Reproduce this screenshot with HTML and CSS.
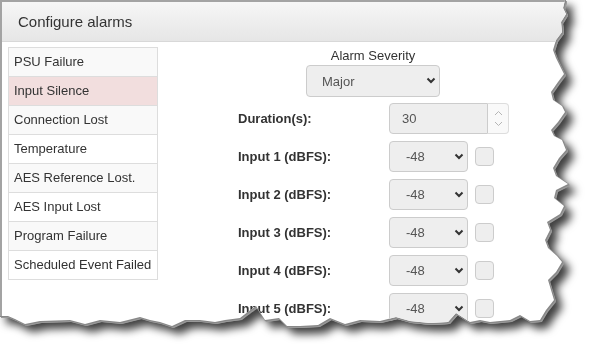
FILE: index.html
```html
<html lang="en">
<head>
    <meta charset="UTF-8">
    <meta name="viewport" content="width=device-width, initial-scale=1.0">
    <title>Configure alarms</title>
    <link rel="stylesheet" href="styles.css">
</head>
<body>
    <div class="shot">
        <div class="panel">
            <div class="panel-heading">Configure alarms</div>
            <div class="panel-body">
                <ul class="alarm-list">
                    <li>PSU Failure</li>
                    <li class="active">Input Silence</li>
                    <li>Connection Lost</li>
                    <li>Temperature</li>
                    <li>AES Reference Lost.</li>
                    <li>AES Input Lost</li>
                    <li>Program Failure</li>
                    <li>Scheduled Event Failed</li>
                </ul>
                <div class="alarm-form">
                    <div class="severity">
                        <label for="severity">Alarm Severity</label>
                        <div class="select-wrap wide">
                            <select id="severity">
                                <option>Major</option>
                                <option>Minor</option>
                                <option>Warning</option>
                            </select>
                            <svg class="chevron" width="10" height="7" viewBox="0 0 10 7"><path d="M1.5 1.5 L5 5 L8.5 1.5" fill="none" stroke="#333" stroke-width="2"/></svg>
                        </div>
                    </div>
                    <div class="row">
                        <label for="duration">Duration(s):</label>
                        <div class="number-wrap">
                            <input type="text" id="duration" value="30">
                            <div class="spinner">
                                <svg width="9" height="6" viewBox="0 0 9 6"><path d="M1 5 L4.5 1.5 L8 5" fill="none" stroke="#b5b5b5" stroke-width="1"/></svg>
                                <svg width="9" height="6" viewBox="0 0 9 6"><path d="M1 1 L4.5 4.5 L8 1" fill="none" stroke="#b5b5b5" stroke-width="1"/></svg>
                            </div>
                        </div>
                    </div>
                    <div class="row">
                        <label>Input 1 (dBFS):</label>
                        <div class="select-wrap">
                            <select><option>-48</option></select>
                            <svg class="chevron" width="10" height="7" viewBox="0 0 10 7"><path d="M1.5 1.5 L5 5 L8.5 1.5" fill="none" stroke="#333" stroke-width="2"/></svg>
                        </div>
                        <span class="check"></span>
                    </div>
                    <div class="row">
                        <label>Input 2 (dBFS):</label>
                        <div class="select-wrap">
                            <select><option>-48</option></select>
                            <svg class="chevron" width="10" height="7" viewBox="0 0 10 7"><path d="M1.5 1.5 L5 5 L8.5 1.5" fill="none" stroke="#333" stroke-width="2"/></svg>
                        </div>
                        <span class="check"></span>
                    </div>
                    <div class="row">
                        <label>Input 3 (dBFS):</label>
                        <div class="select-wrap">
                            <select><option>-48</option></select>
                            <svg class="chevron" width="10" height="7" viewBox="0 0 10 7"><path d="M1.5 1.5 L5 5 L8.5 1.5" fill="none" stroke="#333" stroke-width="2"/></svg>
                        </div>
                        <span class="check"></span>
                    </div>
                    <div class="row">
                        <label>Input 4 (dBFS):</label>
                        <div class="select-wrap">
                            <select><option>-48</option></select>
                            <svg class="chevron" width="10" height="7" viewBox="0 0 10 7"><path d="M1.5 1.5 L5 5 L8.5 1.5" fill="none" stroke="#333" stroke-width="2"/></svg>
                        </div>
                        <span class="check"></span>
                    </div>
                    <div class="row">
                        <label>Input 5 (dBFS):</label>
                        <div class="select-wrap">
                            <select><option>-48</option></select>
                            <svg class="chevron" width="10" height="7" viewBox="0 0 10 7"><path d="M1.5 1.5 L5 5 L8.5 1.5" fill="none" stroke="#333" stroke-width="2"/></svg>
                        </div>
                        <span class="check"></span>
                    </div>
                </div>
            </div>
        </div>
    </div>
</body>
</html>
```

FILE: styles.css
```css
body {
    margin: 0;
    background: #fff;
    font-family: "Liberation Sans", Arial, sans-serif;
    font-size: 13px;
    color: #333;
}
.shot {
    width: 599px;
    height: 363px;
    filter: drop-shadow(1px 0 0 #888) drop-shadow(0 1px 0 #888) drop-shadow(1px 1px 0 #999) drop-shadow(6px 6px 4px rgba(0, 0, 0, 0.75));
}
.panel {
    width: 585px;
    height: 340px;
    background: #fff;
    border-top: 2px solid #a3a3a3;
    border-left: 2px solid #a3a3a3;
    box-sizing: border-box;
    overflow: hidden;
    clip-path: polygon(0 0, 565px 0, 563px 8px, 566px 14px, 561px 22px, 562px 32px, 556px 40px, 553px 50px, 556px 58px, 560px 66px, 564px 74px, 558px 82px, 551px 92px, 553px 100px, 562px 106px, 565px 112px, 558px 122px, 551px 130px, 554px 136px, 562px 140px, 566px 150px, 559px 158px, 553px 168px, 556px 176px, 568px 184px, 556px 190px, 554px 198px, 564px 206px, 560px 214px, 547px 222px, 550px 230px, 545px 240px, 548px 248px, 557px 256px, 562px 262px, 556px 272px, 548px 280px, 551px 290px, 554px 300px, 546px 310px, 540px 320px, 530px 321px, 520px 315px, 510px 320px, 490px 322px, 480px 320px, 470px 322px, 456px 313px, 448px 322px, 430px 323px, 410px 321px, 396px 317px, 380px 321px, 360px 320px, 345px 324px, 330px 318px, 318px 325px, 300px 326px, 287px 326px, 279px 318px, 265px 320px, 256px 306px, 249px 311px, 240px 318px, 225px 320px, 215px 322px, 200px 320px, 185px 320px, 172px 326px, 160px 322px, 150px 320px, 140px 317px, 120px 322px, 100px 320px, 85px 324px, 70px 320px, 40px 321px, 25px 324px, 15px 319px, 8px 316px, 0 316px);
}
.panel-heading {
    height: 39px;
    line-height: 39px;
    padding-left: 16px;
    font-size: 15px;
    color: #333;
    background: linear-gradient(#f6f6f6, #e6e6e6);
    border-bottom: 1px solid #d8d8d8;
}
.panel-body {
    display: flex;
    padding: 5px 6px;
}
.alarm-list {
    list-style: none;
    margin: 0;
    padding: 0;
    width: 150px;
    box-sizing: border-box;
    border: 1px solid #ddd;
    align-self: flex-start;
}
.alarm-list li {
    padding: 6px 5px;
    line-height: 16px;
    white-space: nowrap;
    background: #fff;
}
.alarm-list li + li {
    border-top: 1px solid #ddd;
}
.alarm-list li:nth-child(odd) {
    background: #f9f9f9;
}
.alarm-list li.active {
    background: #f2dede;
}
.alarm-form {
    padding-left: 80px;
    display: flex;
    flex-direction: column;
    gap: 7px;
}
.severity {
    width: 270px;
    text-align: center;
    margin-bottom: -1px;
}
.severity label {
    display: block;
    line-height: 16px;
    padding-top: 1px;
    margin-bottom: 1px;
}
.row {
    display: flex;
    align-items: center;
}
.row label {
    width: 151px;
    font-weight: bold;
}
.select-wrap {
    position: relative;
    width: 79px;
    height: 31px;
}
.select-wrap.wide {
    width: 134px;
    height: 32px;
    margin: 0 auto;
}
.select-wrap select {
    appearance: none;
    -webkit-appearance: none;
    width: 100%;
    height: 100%;
    box-sizing: border-box;
    border: 1px solid #ccc;
    border-radius: 4px;
    background: #eee;
    color: #555;
    font-family: inherit;
    font-size: 13px;
    padding: 0 0 0 16px;
    margin: 0;
}
.select-wrap.wide select {
    padding-left: 15px;
}
.chevron {
    position: absolute;
    right: 4px;
    top: 12px;
    pointer-events: none;
}
.number-wrap {
    display: flex;
    height: 31px;
}
.number-wrap input {
    width: 99px;
    height: 31px;
    box-sizing: border-box;
    border: 1px solid #ccc;
    border-radius: 4px 0 0 4px;
    background: #eee;
    color: #555;
    font-family: inherit;
    font-size: 13px;
    padding: 0 0 0 12px;
    margin: 0;
}
.spinner {
    width: 21px;
    box-sizing: border-box;
    border: 1px solid #ddd;
    border-left: none;
    border-radius: 0 4px 4px 0;
    background: #f9f9f9;
    display: flex;
    flex-direction: column;
    align-items: center;
    justify-content: space-around;
    padding: 3px 0;
}
.check {
    width: 19px;
    height: 19px;
    box-sizing: border-box;
    margin-left: 7px;
    border: 1px solid #ccc;
    border-radius: 4px;
    background: #eee;
}
```
